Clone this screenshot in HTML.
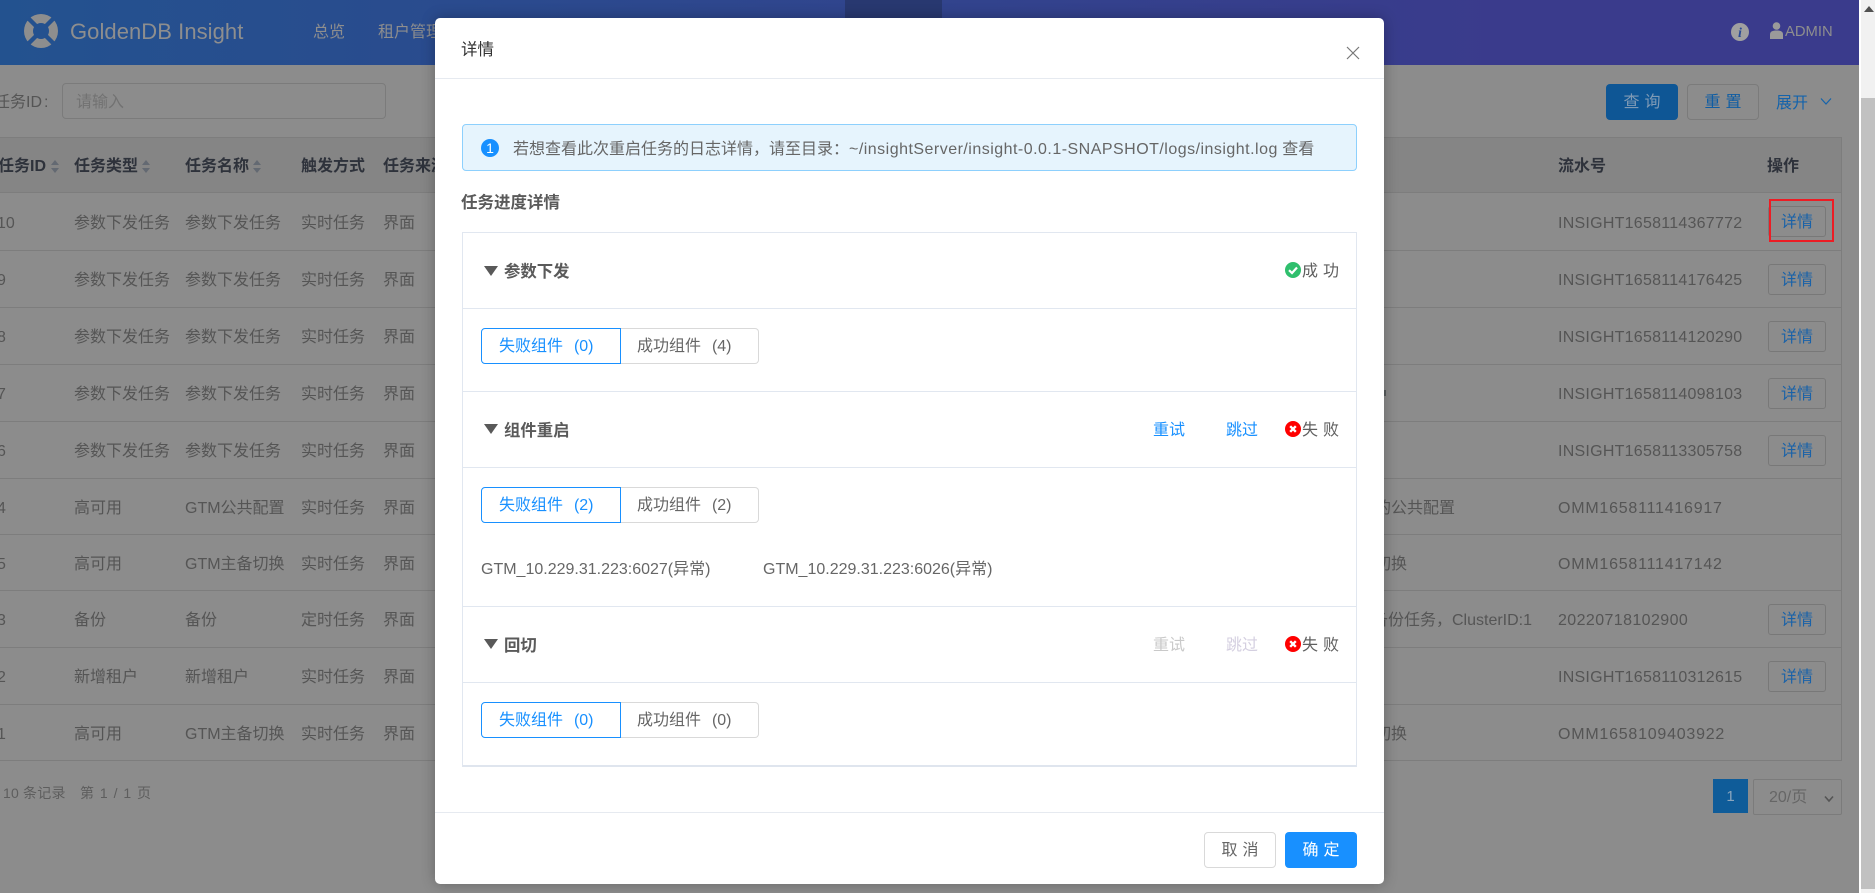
<!DOCTYPE html>
<html lang="zh-CN"><head><meta charset="utf-8"><title>GoldenDB Insight</title>
<style>
*{box-sizing:border-box;margin:0;padding:0}
html,body{width:1875px;height:893px;overflow:hidden;background:#8c8c8c}
body{position:relative;font:16px/1.5 "Liberation Sans","Noto Sans CJK SC",sans-serif;color:#555}
div,svg{position:absolute}
.t{white-space:nowrap}
.nav{left:0;top:0;width:1859px;height:65px;background:linear-gradient(90deg,#23528f 0,#3a3b8c 1500px)}
.navt{color:#8e8e8e}
.hd{left:0;top:137px;width:1842px;height:56px;background:#858585;border-top:1px solid #7d7d7d;border-bottom:1px solid #7d7d7d}
.h{top:2px;height:54px;line-height:54px;font-weight:700;color:#2e323b;white-space:nowrap}
.sort{width:8px;height:13px;top:22px}
.r{left:0;width:1842px;border-bottom:1px solid #7d7d7d}
.c{top:2px;height:100%;white-space:nowrap;display:flex;align-items:center}
.c1{left:-3px}.c2{left:74px}.c3{left:185px}.c4{left:301px}.c5{left:383px}.c7{left:1558px}
.ins{letter-spacing:.25px}.omm{letter-spacing:.77px}
.btn{left:1768px;width:58px;height:31px;top:13px;border:1px solid #787878;border-radius:3px;color:#1a62a8;text-align:center;line-height:31px}
.vr{left:1841px;top:137px;width:1px;height:624px;background:#7d7d7d}
.modal{left:435px;top:18px;width:949px;height:866px;background:#fff;border-radius:5px;box-shadow:0 0 14px rgba(0,0,0,.28)}
.ln{height:1px;background:#e6eaf0}
.sec{left:27px;width:895px;height:1px;background:#e1e7f0}
.st{font-weight:700;color:#5a5a5a;white-space:nowrap;font-size:16.4px;line-height:24px}
.tri{width:0;height:0;border-left:7.5px solid transparent;border-right:7.5px solid transparent;border-top:10px solid #595959}
.tab{height:36px;line-height:36px;white-space:nowrap;border:1px solid #d9d9d9;text-align:left;word-spacing:6.500px}
.tab.a{left:0;top:0;border-color:#1890ff;color:#1890ff;border-radius:4px 0 0 4px;width:140px;padding-left:17px;z-index:2;background:#fff}
.tab.b{top:0;left:139px;width:139px;padding-left:17px;border-left:0;border-radius:0 4px 4px 0;color:#666}
.lk{color:#1890ff;white-space:nowrap;line-height:24px}
.dis{color:#c9c9c9}
.stt{color:#5f5f5f;white-space:nowrap;line-height:24px;letter-spacing:5px}
</style></head><body>

<div class="nav"></div>
<div style="left:845px;top:0;width:97px;height:18px;background:#283870"></div>
<svg style="left:24px;top:14px" width="34" height="34" viewBox="0 0 34 34"><circle cx="17" cy="17" r="17" fill="#8e8e8e"/><g stroke="#24518f" stroke-width="4.400"><line x1="4" y1="4" x2="30" y2="30"/><line x1="30" y1="4" x2="4" y2="30"/></g><circle cx="17" cy="17" r="8" fill="#24518f"/></svg>
<div class="t navt" style="left:70px;top:15px;font-size:22px;line-height:34px;letter-spacing:.06px">GoldenDB Insight</div>
<div class="t navt" style="left:313px;top:21px;line-height:24px">总览</div>
<div class="t navt" style="left:378px;top:21px;line-height:24px">租户管理</div>
<svg style="left:1731px;top:23px" width="18" height="18" viewBox="0 0 18 18"><circle cx="9" cy="9" r="9" fill="#a0a0a0"/><text x="9" y="14" text-anchor="middle" font-family="Liberation Serif" font-style="italic" font-weight="700" font-size="14" fill="#2a4a95">i</text></svg>
<svg style="left:1770px;top:22px" width="13" height="17" viewBox="0 0 13 17"><circle cx="6.500" cy="4" r="3.800" fill="#9a9a9a"/><path d="M0 17V12.500C0 9.500 2.500 8.500 6.500 8.500S13 9.500 13 12.500V17Z" fill="#9a9a9a"/></svg>
<div class="t navt" style="left:1785px;top:21px;font-size:14.800px;line-height:22px">ADMIN</div>

<div class="t" style="left:-6px;top:91px;line-height:24px">任务ID</div>
<div class="t" style="left:44px;top:91px;line-height:24px">:</div>
<div style="left:62px;top:83px;width:324px;height:36px;border:1px solid #7b7b7b;border-radius:4px"></div>
<div class="t" style="left:76px;top:91px;line-height:24px;color:#727272">请输入</div>
<div style="left:1606px;top:84px;width:72px;height:36px;background:#0e5695;border-radius:4px;text-align:center;line-height:38px;color:#7f9ab5;letter-spacing:5px;padding-left:5px">查询</div>
<div style="left:1687px;top:84px;width:72px;height:36px;border:1px solid #7b7b7b;border-radius:4px;text-align:center;line-height:36px;color:#0f5da3;letter-spacing:5px;padding-left:5px">重置</div>
<div class="t" style="left:1776px;top:92px;line-height:24px;color:#1463ab">展开</div>
<svg style="left:1820px;top:97px" width="12" height="9" viewBox="0 0 12 9"><path d="M1 1.500L6 7L11 1.500" fill="none" stroke="#1463ab" stroke-width="1.200"/></svg>

<div class="hd">
  <div class="h" style="left:-2px">任务ID</div>
  <svg class="sort" style="left:51px" viewBox="0 0 8 13"><path d="M4 0L8 5H0ZM4 13L0 8H8Z" fill="#636972"/></svg>
  <div class="h" style="left:74px">任务类型</div>
  <svg class="sort" style="left:142px" viewBox="0 0 8 13"><path d="M4 0L8 5H0ZM4 13L0 8H8Z" fill="#636972"/></svg>
  <div class="h" style="left:185px">任务名称</div>
  <svg class="sort" style="left:253px" viewBox="0 0 8 13"><path d="M4 0L8 5H0ZM4 13L0 8H8Z" fill="#636972"/></svg>
  <div class="h" style="left:301px">触发方式</div>
  <div class="h" style="left:383px">任务来源</div>
  <div class="h" style="left:1558px">流水号</div>
  <div class="h" style="left:1767px">操作</div>
</div>

<div class="r" style="top:193px;height:58px"><div class="c c1">10</div><div class="c c2">参数下发任务</div><div class="c c3">参数下发任务</div><div class="c c4">实时任务</div><div class="c c5">界面</div><div class="c c7 ins">INSIGHT1658114367772</div><div class="btn">详情</div></div>
<div class="r" style="top:251px;height:57px"><div class="c c1">9</div><div class="c c2">参数下发任务</div><div class="c c3">参数下发任务</div><div class="c c4">实时任务</div><div class="c c5">界面</div><div class="c c7 ins">INSIGHT1658114176425</div><div class="btn">详情</div></div>
<div class="r" style="top:308px;height:57px"><div class="c c1">8</div><div class="c c2">参数下发任务</div><div class="c c3">参数下发任务</div><div class="c c4">实时任务</div><div class="c c5">界面</div><div class="c c7 ins">INSIGHT1658114120290</div><div class="btn">详情</div></div>
<div class="r" style="top:365px;height:57px"><div class="c c1">7</div><div class="c c2">参数下发任务</div><div class="c c3">参数下发任务</div><div class="c c4">实时任务</div><div class="c c5">界面</div><div class="c c7 ins">INSIGHT1658114098103</div><div class="btn">详情</div></div>
<div class="r" style="top:422px;height:57px"><div class="c c1">6</div><div class="c c2">参数下发任务</div><div class="c c3">参数下发任务</div><div class="c c4">实时任务</div><div class="c c5">界面</div><div class="c c7 ins">INSIGHT1658113305758</div><div class="btn">详情</div></div>
<div class="r" style="top:479px;height:56px"><div class="c c1">4</div><div class="c c2">高可用</div><div class="c c3">GTM公共配置</div><div class="c c4">实时任务</div><div class="c c5">界面</div><div class="c" style="left:1375px">的公共配置</div><div class="c c7 omm">OMM1658111416917</div></div>
<div class="r" style="top:535px;height:56px"><div class="c c1">5</div><div class="c c2">高可用</div><div class="c c3">GTM主备切换</div><div class="c c4">实时任务</div><div class="c c5">界面</div><div class="c" style="left:1375px">切换</div><div class="c c7 omm">OMM1658111417142</div></div>
<div class="r" style="top:591px;height:57px"><div class="c c1">3</div><div class="c c2">备份</div><div class="c c3">备份</div><div class="c c4">定时任务</div><div class="c c5">界面</div><div class="c" style="left:1372px">备份任务，ClusterID:1</div><div class="c c7" style="letter-spacing:.4px">20220718102900</div><div class="btn">详情</div></div>
<div class="r" style="top:648px;height:57px"><div class="c c1">2</div><div class="c c2">新增租户</div><div class="c c3">新增租户</div><div class="c c4">实时任务</div><div class="c c5">界面</div><div class="c c7 ins">INSIGHT1658110312615</div><div class="btn">详情</div></div>
<div class="r" style="top:705px;height:56px"><div class="c c1">1</div><div class="c c2">高可用</div><div class="c c3">GTM主备切换</div><div class="c c4">实时任务</div><div class="c c5">界面</div><div class="c" style="left:1375px">切换</div><div class="c c7 omm">OMM1658109403922</div></div>
<div class="vr"></div>

<div style="left:1384px;top:390px;width:2px;height:6px;background:#5a5f60"></div>
<div style="left:1769px;top:199px;width:65px;height:43px;border:2px solid #ed1c24"></div>

<div class="t" style="left:3px;top:783px;font-size:14px;line-height:21px;color:#5e5e5e;letter-spacing:.2px">10 条记录</div>
<div class="t" style="left:80px;top:783px;font-size:14px;line-height:21px;color:#5e5e5e;letter-spacing:1px">第 1 / 1 页</div>
<div style="left:1713px;top:779px;width:35px;height:34px;background:#0f5c99;color:#8aa5bd;text-align:center;line-height:36px;font-size:15px">1</div>
<div style="left:1753px;top:779px;width:89px;height:36px;border:1px solid #7b7b7b;border-radius:2px"></div>
<div class="t" style="left:1769px;top:786px;line-height:24px;color:#666">20/页</div>
<svg style="left:1824px;top:795px" width="10" height="8" viewBox="0 0 10 8"><path d="M1 1.500L5 6L9 1.500" fill="none" stroke="#555" stroke-width="1.600"/></svg>

<div style="left:1859px;top:0;width:2px;height:893px;background:#fff"></div>
<div style="left:1861px;top:0;width:14px;height:893px;background:#f1f1f1"></div>
<div style="left:1861px;top:98px;width:14px;height:791px;background:#c1c1c1"></div>
<svg style="left:1864px;top:6px" width="10" height="6" viewBox="0 0 10 6"><path d="M5 0L10 6H0Z" fill="#505050"/></svg>

<div class="modal">
  <div class="t" style="left:26px;top:20px;font-size:16.500px;line-height:25px;color:#333">详情</div>
  <svg style="left:911px;top:28px" width="14" height="14" viewBox="0 0 14 14"><path d="M1 1L13 13M13 1L1 13" stroke="#777" stroke-width="1.200"/></svg>
  <div class="ln" style="left:0;top:60px;width:949px"></div>

  <div style="left:27px;top:106px;width:895px;height:47px;background:#e6f4fd;border:1px solid #8dd0fd;border-radius:4px"></div>
  <svg style="left:46px;top:121px" width="18" height="18" viewBox="0 0 18 18"><circle cx="9" cy="9" r="9" fill="#1890ff"/><text x="9" y="14" text-anchor="middle" font-family="Liberation Sans" font-size="14" fill="#fff">1</text></svg>
  <div class="t" style="left:78px;top:119px;line-height:25px;color:#666">若想查看此次重启任务的日志详情，请至目录：<span style="letter-spacing:.48px">~/insightServer/insight-0.0.1-SNAPSHOT/logs/insight.log</span> 查看</div>
  <div class="st" style="left:26px;top:173px;font-size:16.500px">任务进度详情</div>

  <div style="left:27px;top:214px;width:895px;height:535px;border:1px solid #e1e7f0;border-bottom:2px solid #dfe5ee"></div>
  <div class="sec" style="top:290px"></div>
  <div class="sec" style="top:373px"></div>
  <div class="sec" style="top:449px"></div>
  <div class="sec" style="top:588px"></div>
  <div class="sec" style="top:664px"></div>

  <div class="tri" style="left:49px;top:248px"></div>
  <div class="st" style="left:69px;top:242px">参数下发</div>
  <svg style="left:850px;top:244px" width="16" height="16" viewBox="0 0 16 16"><circle cx="8" cy="8" r="8" fill="#2fbf6d"/><path d="M4 8.200L7 11L12 5.500" fill="none" stroke="#fff" stroke-width="2.200"/></svg>
  <div class="stt" style="left:867px;top:242px">成功</div>
  <div style="left:46px;top:310px;width:323px;height:36px"><div class="tab a">失败组件 (0)</div><div class="tab b">成功组件 (4)</div></div>

  <div class="tri" style="left:49px;top:406px"></div>
  <div class="st" style="left:69px;top:401px">组件重启</div>
  <div class="lk" style="left:718px;top:401px">重试</div>
  <div class="lk" style="left:791px;top:401px">跳过</div>
  <svg style="left:850px;top:403px" width="16" height="16" viewBox="0 0 16 16"><circle cx="8" cy="8" r="8" fill="#f00"/><path d="M5.200 5.200L10.800 10.800M10.800 5.200L5.200 10.800" stroke="#fff" stroke-width="2.400"/></svg>
  <div class="stt" style="left:867px;top:401px">失败</div>
  <div style="left:46px;top:469px;width:323px;height:36px"><div class="tab a">失败组件 (2)</div><div class="tab b">成功组件 (2)</div></div>
  <div class="t" style="left:46px;top:540px;line-height:24px;color:#666">GTM_10.229.31.223:6027(异常)</div>
  <div class="t" style="left:328px;top:540px;line-height:24px;color:#666">GTM_10.229.31.223:6026(异常)</div>

  <div class="tri" style="left:49px;top:621px"></div>
  <div class="st" style="left:69px;top:616px">回切</div>
  <div class="lk dis" style="left:718px;top:616px">重试</div>
  <div class="lk" style="left:791px;top:616px;color:#d4cfe0">跳过</div>
  <svg style="left:850px;top:618px" width="16" height="16" viewBox="0 0 16 16"><circle cx="8" cy="8" r="8" fill="#f00"/><path d="M5.200 5.200L10.800 10.800M10.800 5.200L5.200 10.800" stroke="#fff" stroke-width="2.400"/></svg>
  <div class="stt" style="left:867px;top:616px">失败</div>
  <div style="left:46px;top:684px;width:323px;height:36px"><div class="tab a">失败组件 (0)</div><div class="tab b">成功组件 (0)</div></div>

  <div class="ln" style="left:0;top:794px;width:949px"></div>
  <div style="left:769px;top:814px;width:72px;height:36px;border:1px solid #d9d9d9;border-radius:4px;text-align:center;line-height:36px;color:#666;letter-spacing:5px;padding-left:5px">取消</div>
  <div style="left:850px;top:814px;width:72px;height:36px;background:#1890ff;border-radius:4px;text-align:center;line-height:38px;color:#fff;letter-spacing:5px;padding-left:5px">确定</div>
</div>
</body></html>
